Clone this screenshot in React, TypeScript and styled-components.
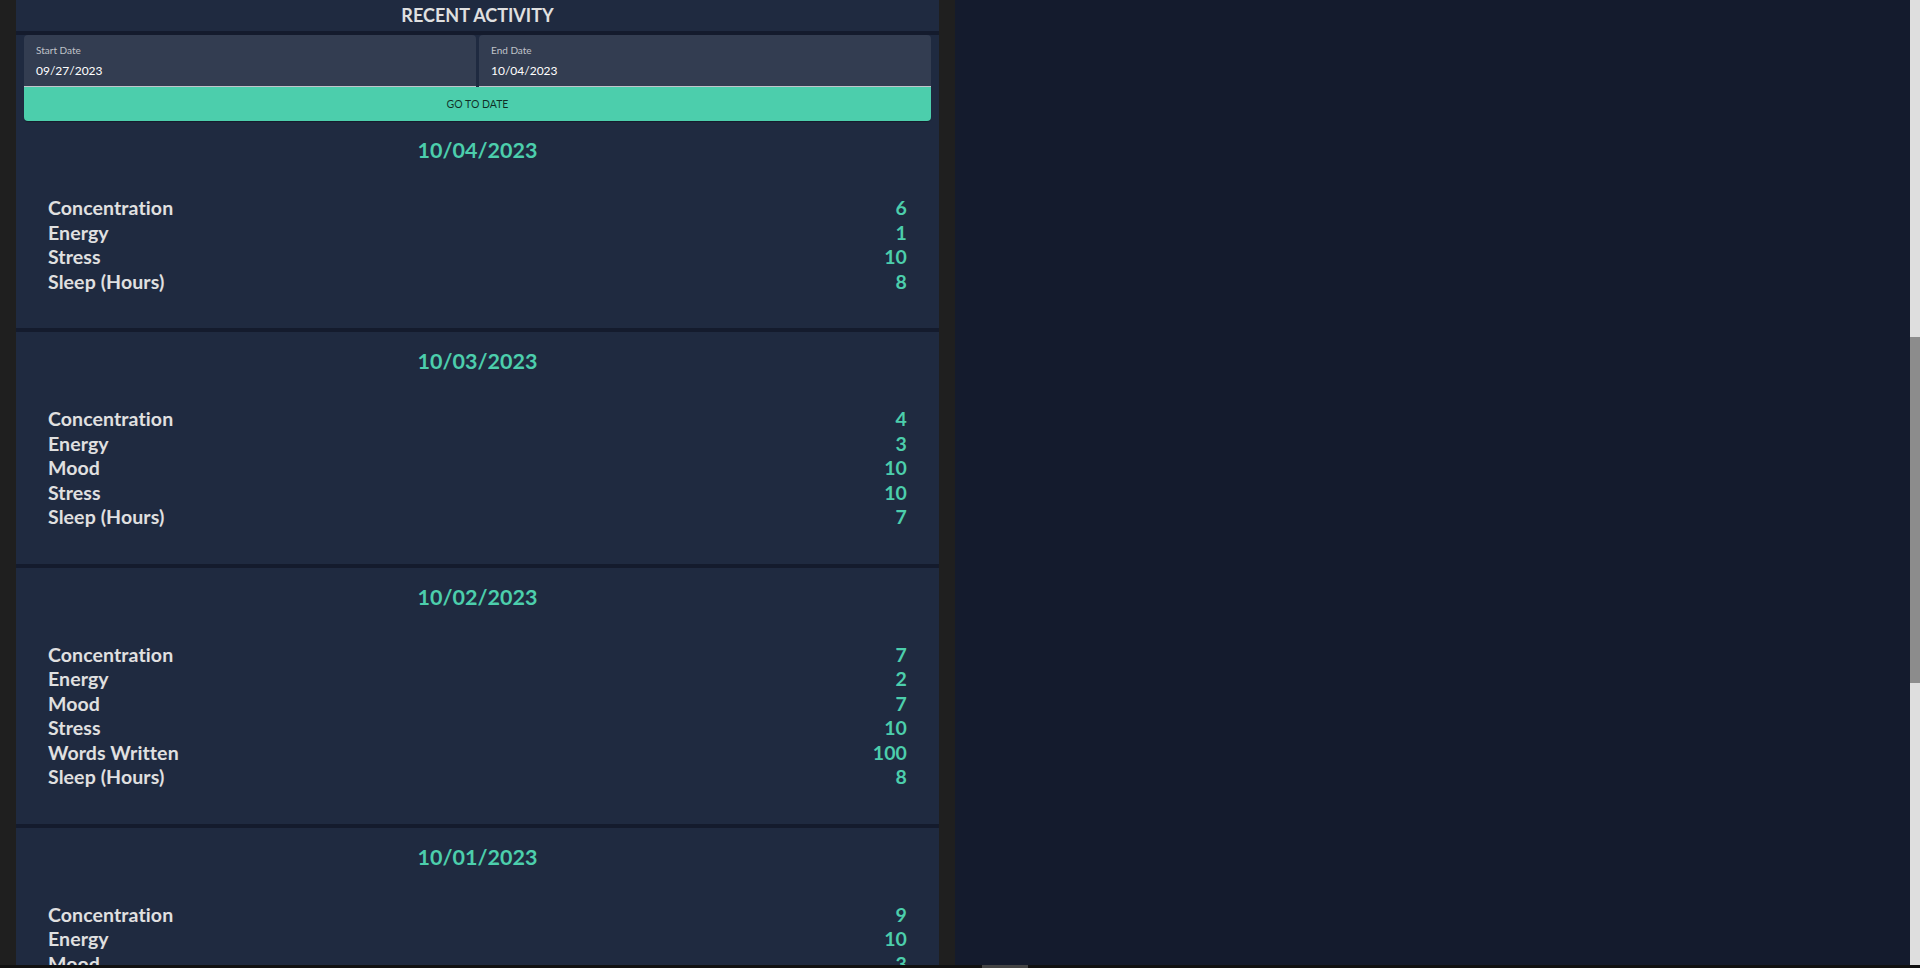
import React from "react";
import styled, { createGlobalStyle } from "styled-components";

const GlobalStyle = createGlobalStyle`
  html, body {
    margin: 0;
    padding: 0;
    overflow: hidden;
    background: #141b2d;
  }
  * {
    box-sizing: border-box;
  }
`;

const Screen = styled.div`
  width: 1920px;
  height: 968px;
  display: flex;
  flex-direction: column;
  overflow: hidden;
  font-family: Lato, "Open Sans", sans-serif;
`;

const Body = styled.div`
  flex: 1;
  min-height: 0;
  display: flex;
`;

const Gutter = styled.div`
  width: 16px;
  flex-shrink: 0;
  background: #1f1f1f;
`;

const Panel = styled.section`
  width: 923px;
  flex-shrink: 0;
  background: #1f2a40;
  display: flex;
  flex-direction: column;
  overflow: hidden;
`;

const Header = styled.h2`
  margin: 0;
  height: 35px;
  line-height: 31px;
  text-align: center;
  font-size: 18px;
  font-weight: 700;
  color: #e0e0e0;
  border-bottom: 4px solid #141b2d;
`;

const DateForm = styled.form`
  padding: 0 8px;
  display: flex;
  flex-direction: column;
`;

const Fields = styled.div`
  display: grid;
  grid-template-columns: 1fr 1fr;
  column-gap: 3px;
`;

const Field = styled.label`
  height: 52px;
  padding: 8px 12px 0;
  background: #333d51;
  border-radius: 4px 4px 0 0;
  border-bottom: 1px solid rgba(255, 255, 255, 0.7);
  display: flex;
  flex-direction: column;
`;

const FieldLabel = styled.span`
  font-size: 10px;
  line-height: 14px;
  color: rgba(255, 255, 255, 0.7);
`;

const FieldValue = styled.span`
  margin-top: 6px;
  font-size: 12px;
  line-height: 16px;
  color: #ffffff;
`;

const GoButton = styled.button`
  height: 34px;
  border: 0;
  border-radius: 0 0 4px 4px;
  background: #4cceac;
  color: rgba(0, 0, 0, 0.78);
  font-family: Lato, "Open Sans", sans-serif;
  font-size: 10.5px;
  font-weight: 400;
  text-transform: uppercase;
  box-shadow: 0 2px 1px -1px rgba(0, 0, 0, 0.2), 0 1px 1px rgba(0, 0, 0, 0.14);
  cursor: pointer;
`;

const Card = styled.article`
  padding: 16px 32px 34px;
  border-bottom: 4px solid #141b2d;
  flex-shrink: 0;
`;

const CardDate = styled.h3`
  margin: 0 0 32.6px;
  text-align: center;
  font-size: 21.5px;
  line-height: 26.4px;
  font-weight: 700;
  color: #4cceac;
`;

const Row = styled.div`
  display: flex;
  justify-content: space-between;
  font-size: 19.5px;
  line-height: 24.5px;
  font-weight: 700;
  letter-spacing: 0.1px;
`;

const RowName = styled.span`
  color: #e0e0e0;
`;

const RowValue = styled.span`
  color: #4cceac;
`;

const Main = styled.main`
  flex: 1;
  background: #141b2d;
`;

const ScrollTrack = styled.div`
  width: 10px;
  flex-shrink: 0;
  background: #dedede;
  padding-top: 337px;
`;

const ScrollThumb = styled.div`
  height: 346px;
  background: #8c8c8c;
`;

const HScroll = styled.div`
  height: 3px;
  flex-shrink: 0;
  background: #111111;
  padding-left: 982px;
`;

const HThumb = styled.div`
  width: 46px;
  height: 100%;
  background: #444444;
`;

const entries: { date: string; stats: [string, number][] }[] = [
  {
    date: "10/04/2023",
    stats: [
      ["Concentration", 6],
      ["Energy", 1],
      ["Stress", 10],
      ["Sleep (Hours)", 8],
    ],
  },
  {
    date: "10/03/2023",
    stats: [
      ["Concentration", 4],
      ["Energy", 3],
      ["Mood", 10],
      ["Stress", 10],
      ["Sleep (Hours)", 7],
    ],
  },
  {
    date: "10/02/2023",
    stats: [
      ["Concentration", 7],
      ["Energy", 2],
      ["Mood", 7],
      ["Stress", 10],
      ["Words Written", 100],
      ["Sleep (Hours)", 8],
    ],
  },
  {
    date: "10/01/2023",
    stats: [
      ["Concentration", 9],
      ["Energy", 10],
      ["Mood", 3],
    ],
  },
];

const App = () => {
  return (
    <Screen>
      <GlobalStyle />
      <Body>
        <Gutter />
        <Panel>
          <Header>RECENT ACTIVITY</Header>
          <DateForm onSubmit={(e) => e.preventDefault()}>
            <Fields>
              <Field>
                <FieldLabel>Start Date</FieldLabel>
                <FieldValue>09/27/2023</FieldValue>
              </Field>
              <Field>
                <FieldLabel>End Date</FieldLabel>
                <FieldValue>10/04/2023</FieldValue>
              </Field>
            </Fields>
            <GoButton type="submit">Go to date</GoButton>
          </DateForm>
          {entries.map((entry) => (
            <Card key={entry.date}>
              <CardDate>{entry.date}</CardDate>
              {entry.stats.map(([name, value]) => (
                <Row key={name}>
                  <RowName>{name}</RowName>
                  <RowValue>{value}</RowValue>
                </Row>
              ))}
            </Card>
          ))}
        </Panel>
        <Gutter />
        <Main />
        <ScrollTrack>
          <ScrollThumb />
        </ScrollTrack>
      </Body>
      <HScroll>
        <HThumb />
      </HScroll>
    </Screen>
  );
};

export default App;
